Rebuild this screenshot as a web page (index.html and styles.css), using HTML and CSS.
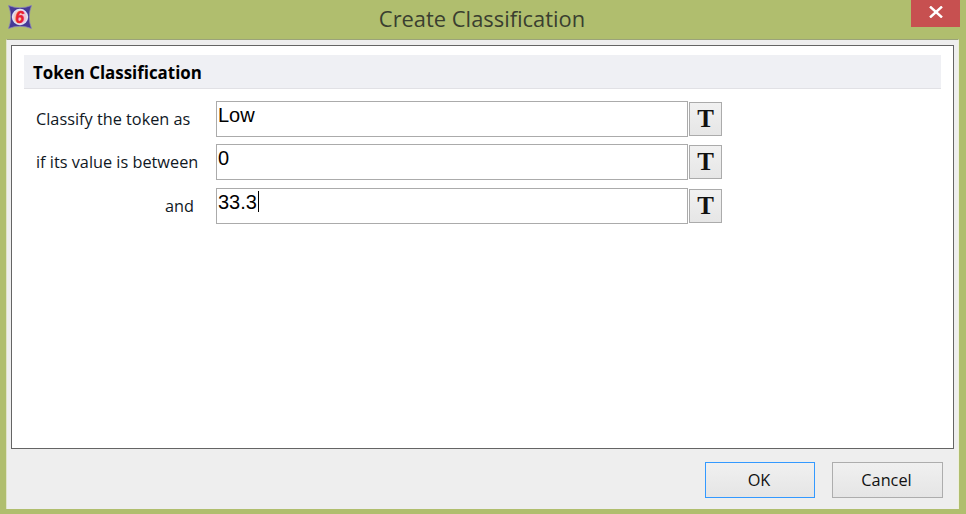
FILE: index.html
```html
<!DOCTYPE html>
<html lang="en">

<head>
    <title>Create Classification</title>
    <meta charset="UTF-8">
    <meta name="viewport" content="width=device-width, initial-scale=1">
    <link rel="stylesheet" href="styles.css">
</head>

<body>
    <div class="window">
        <div class="titlebar">
            <div class="title-left">
                <svg class="app-icon" width="24" height="24" viewBox="0 0 24 24">
                    <path d="M0.5 0.5 Q12 5 23.5 0.5 Q19 12 23.5 23.5 Q12 19 0.5 23.5 Q5 12 0.5 0.5 Z" fill="#463a96" stroke="#8d86b8" stroke-width="0.8" />
                    <circle cx="12" cy="12" r="7.4" fill="#f3c6cc" stroke="#dfe2f4" stroke-width="1.5" />
                    <text x="11.8" y="17.6" text-anchor="middle" class="app-icon-text">6</text>
                </svg>
            </div>
            <div class="title">Create Classification</div>
            <div class="title-right">
                <div class="close">
                    <svg width="16" height="12" viewBox="0 0 16 12">
                        <path d="M2 0.5 L14 11.5 M14 0.5 L2 11.5" stroke="#fff" stroke-width="2.4" fill="none" />
                    </svg>
                </div>
            </div>
        </div>
        <div class="client">
            <div class="panel">
                <div class="section-head">Token Classification</div>
                <div class="form">
                    <label class="lbl">Classify the token as</label>
                    <input type="text" class="field" value="Low">
                    <button class="t-btn">T</button>

                    <label class="lbl">if its value is between</label>
                    <input type="text" class="field" value="0">
                    <button class="t-btn">T</button>

                    <label class="lbl lbl-right">and</label>
                    <div class="field field-caret"><span>33.3</span><i class="caret"></i></div>
                    <button class="t-btn">T</button>
                </div>
            </div>
            <div class="footer">
                <button class="btn btn-default">OK</button>
                <button class="btn">Cancel</button>
            </div>
        </div>
    </div>
</body>

</html>
```

FILE: styles.css
```css
* {
    padding: 0;
    margin: 0;
    box-sizing: border-box;
}

body {
    background-color: #b0be6e;
    font-family: "Open Sans", "Noto Sans", sans-serif;
    color: #000;
    overflow: hidden;
}

.window {
    width: 966px;
    height: 514px;
    padding: 0 7px 5px 6px;
    display: flex;
    flex-direction: column;
}

.titlebar {
    height: 39px;
    margin: 0 -7px 0 -6px;
    display: grid;
    grid-template-columns: 1fr auto 1fr;
    flex: none;
}

.title-left {
    padding: 5px 0 0 8px;
}

.app-icon {
    display: block;
}

.app-icon-text {
    font-family: "Liberation Sans", sans-serif;
    font-size: 16px;
    font-weight: 700;
    font-style: italic;
    fill: #e8202f;
    stroke: #e8202f;
    stroke-width: 0.5px;
}

.title {
    font-size: 21.9px;
    line-height: 38px;
    padding-right: 2px;
    color: #3a3f30;
}

.title-right {
    display: flex;
    justify-content: flex-end;
    padding-right: 6px;
}

.close {
    width: 49px;
    height: 27px;
    background-color: #c75050;
    display: flex;
    align-items: center;
    justify-content: center;
    padding-bottom: 3px;
}

.client {
    flex: 1;
    background-color: #eee;
    border-top: 1px solid #9ba37a;
    border-left: 1px solid #dfe3c8;
    border-right: 1px solid #eef0dc;
    padding: 5px 4px 0 4px;
    display: flex;
    flex-direction: column;
}

.panel {
    height: 404px;
    flex: none;
    background-color: #fff;
    border: 1px solid #646464;
    padding: 9px 12px 0 12px;
}

.section-head {
    height: 34px;
    background-color: #eff0f4;
    border-bottom: 1px solid #e1e1e5;
    padding-left: 9px;
    font-size: 16.9px;
    font-weight: 700;
    line-height: 35px;
}

.form {
    display: grid;
    grid-template-columns: 180px 472px 34px;
    grid-template-rows: 36px 37px 36px;
    row-gap: 7px;
    margin-top: 12px;
    padding-left: 12px;
    align-items: start;
}

.lbl {
    font-size: 16.3px;
    line-height: 36px;
    color: #10181f;
}

.lbl-right {
    text-align: right;
    padding-right: 22px;
}

.field {
    height: 36px;
    border: 1px solid #ababab;
    background-color: #fff;
    font-family: "Liberation Sans", sans-serif;
    font-size: 20px;
    color: #000;
    padding: 0 0 7px 1px;
    outline: none;
}

.field-caret {
    display: flex;
    align-items: center;
    line-height: 1;
    padding-bottom: 9px;
}

.caret {
    display: block;
    width: 1px;
    height: 21px;
    background-color: #000;
    margin-left: 1px;
}

.t-btn {
    width: 33px;
    height: 34px;
    margin: 1px 0 0 1px;
    background: linear-gradient(#f1f1f1, #e6e6e6);
    border: 1px solid #ababab;
    font-family: "Liberation Serif", serif;
    font-size: 25px;
    font-weight: 700;
    line-height: 30px;
    color: #111;
}

.footer {
    flex: 1;
    display: flex;
    justify-content: flex-end;
    gap: 17px;
    padding: 13px 11px 0 0;
}

.btn {
    width: 111px;
    height: 36px;
    padding-right: 2px;
    background: linear-gradient(#f0f0f0, #e5e5e5);
    border: 1px solid #adadad;
    font-family: "Open Sans", "Noto Sans", sans-serif;
    font-size: 16.3px;
    color: #111;
}

.btn-default {
    width: 110px;
    border-color: #3399ff;
}
```
